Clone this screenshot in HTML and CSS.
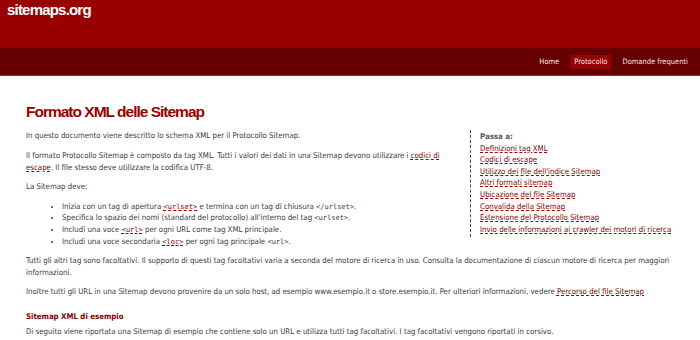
FILE: index.html
```html
<!DOCTYPE html>
<html lang="it">
<head>
<meta charset="utf-8">
<title>sitemaps.org - Protocollo</title>
<link rel="stylesheet" href="styles.css">
</head>
<body>
<header class="masthead">
  <div class="logo">sitemaps.org</div>
</header>
<nav class="navbar">
  <a class="nav-item" href="#">Home</a>
  <a class="nav-item active" href="#">Protocollo</a>
  <a class="nav-item" href="#">Domande frequenti</a>
</nav>
<main class="content">
  <h1 class="title">Formato XML delle Sitemap</h1>
  <aside class="toc">
    <div class="toc-head">Passa a:</div>
    <a class="toc-link" href="#">Definizioni tag XML</a>
    <a class="toc-link" href="#">Codici di escape</a>
    <a class="toc-link" href="#">Utilizzo dei file dell'indice Sitemap</a>
    <a class="toc-link" href="#">Altri formati sitemap</a>
    <a class="toc-link" href="#">Ubicazione del file Sitemap</a>
    <a class="toc-link" href="#">Convalida della Sitemap</a>
    <a class="toc-link" href="#">Estensione del Protocollo Sitemap</a>
    <a class="toc-link" href="#">Invio delle informazioni ai crawler dei motori di ricerca</a>
  </aside>
  <p class="para">In questo documento viene descritto lo schema XML per il Protocollo Sitemap.</p>
  <p class="para">Il formato Protocollo Sitemap è composto da tag XML. Tutti i valori dei dati in una Sitemap devono utilizzare i <a class="link" href="#">codici di escape</a>. Il file stesso deve utilizzare la codifica UTF-8.</p>
  <p class="para">La Sitemap deve:</p>
  <ul class="list">
    <li>Inizia con un tag di apertura <a class="link code" href="#">&lt;urlset&gt;</a> e termina con un tag di chiusura <code class="code">&lt;/urlset&gt;</code>.</li>
    <li>Specifica lo spazio dei nomi (standard del protocollo) all'interno del tag <code class="code">&lt;urlset&gt;</code>.</li>
    <li>Includi una voce <a class="link code" href="#">&lt;url&gt;</a> per ogni URL come tag XML principale.</li>
    <li>Includi una voce secondaria <a class="link code" href="#">&lt;loc&gt;</a> per ogni tag principale <code class="code">&lt;url&gt;</code>.</li>
  </ul>
  <p class="para">Tutti gli altri tag sono facoltativi. Il supporto di questi tag facoltativi varia a seconda del motore di ricerca in uso. Consulta la documentazione di ciascun motore di ricerca per maggiori informazioni.</p>
  <p class="para">Inoltre tutti gli URL in una Sitemap devono provenire da un solo host, ad esempio www.esempio.it o store.esempio.it. Per ulteriori informazioni, vedere <a class="link" href="#">Percorso del file Sitemap</a></p>
  <h2 class="subtitle">Sitemap XML di esempio</h2>
  <p class="para">Di seguito viene riportata una Sitemap di esempio che contiene solo un URL e utilizza tutti tag facoltativi. I tag facoltativi vengono riportati in corsivo.</p>
</main>
</body>
</html>
```
FILE: styles.css
```css
html, body {
  margin: 0;
  padding: 0;
  background: #ffffff;
}
body {
  font-family: "DejaVu Sans", "Liberation Sans", sans-serif;
  font-stretch: condensed;
  color: #3a3a3a;
  font-size: 7.8px;
}
.masthead {
  background: #990000;
  height: 48px;
  box-sizing: border-box;
  padding: 0 0 0 7px;
}
.logo {
  font-family: "Liberation Sans", Arial, sans-serif;
  font-weight: bold;
  font-size: 15px;
  color: #ffffff;
  line-height: 19px;
  letter-spacing: -0.8px;
}
.navbar {
  background: #660000;
  height: 27px;
  border-bottom: 1px solid #7a3a3a;
  display: flex;
  justify-content: flex-end;
  align-items: center;
  padding-right: 6px;
  gap: 5px;
}
.nav-item {
  color: #f0e6e6;
  text-decoration: none;
  font-size: 7.5px;
  padding: 3px 6px;
  line-height: 8px;
}
.nav-item.active {
  background: #990000;
  padding: 3px 4px;
}
.content {
  padding: 26px 20px 0 26px;
}
.title {
  font-family: "Liberation Sans", Arial, sans-serif;
  font-size: 15.5px;
  color: #990000;
  font-weight: bold;
  margin: 0 0 8px 0;
  line-height: 20px;
  letter-spacing: -1px;
}
.toc {
  float: right;
  width: 200px;
  margin: 0 0 0 14px;
  border-left: 1px dashed #444;
  padding: 1px 0 2px 9px;
  display: flex;
  flex-direction: column;
  line-height: 11.6px;
}
.toc-head {
  font-weight: bold;
  color: #555;
}
.toc-link {
  color: #7a0000;
  text-decoration: underline dashed #b00000;
  text-underline-offset: 1px;
  align-self: flex-start;
  white-space: nowrap;
}
.para {
  margin: 0 0 7.5px 0;
  line-height: 12px;
}
.link {
  color: #7a0000;
  text-decoration: underline dashed #b00000;
  text-underline-offset: 1px;
}
.code {
  font-family: "DejaVu Sans Mono", "Liberation Mono", monospace;
  font-size: 7px;
  line-height: 1;
}
.list {
  margin: 0 0 7.5px 0;
  padding-left: 36px;
  line-height: 11.7px;
}
.subtitle {
  font-size: 7.8px;
  font-weight: bold;
  color: #800000;
  margin: 13px 0 3px 0;
  line-height: 12px;
}
```
